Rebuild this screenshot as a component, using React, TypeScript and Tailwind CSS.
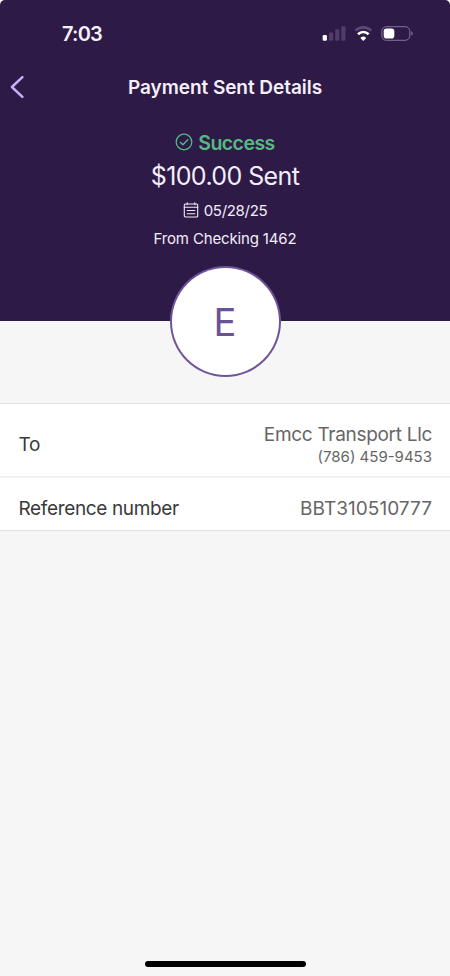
import type { ReactNode } from "react";

function StatusBar() {
  return (
    <div className="flex h-[60px] items-start justify-between pl-[62px] pr-[37px] pt-[22px]">
      <span className="text-[20px] font-semibold leading-6 tracking-[-0.8px] text-[#f6f1fa]">7:03</span>
      <svg width="92" height="20" viewBox="0 0 92 20" fill="none" className="mt-0.5">
        <rect x="1.7" y="11" width="4.2" height="5.8" rx="1.2" fill="#fff" />
        <rect x="8" y="8.6" width="4.2" height="8.2" rx="1.2" fill="#503d68" />
        <rect x="14.2" y="5.2" width="4.2" height="11.6" rx="1.2" fill="#503d68" />
        <rect x="20.3" y="2.2" width="4.2" height="14.6" rx="1.2" fill="#503d68" />
        <path d="M34.3 6.6a11.5 11.5 0 0 1 16 0" stroke="#5a4772" strokeWidth="2.6" />
        <path d="M37 10.2a7.6 7.6 0 0 1 10.6 0" stroke="#fff" strokeWidth="2.6" />
        <path d="M42.3 16.9l-2.9-3a4.2 4.2 0 0 1 5.8 0z" fill="#fff" />
        <rect x="60.8" y="2.7" width="28" height="13.6" rx="4.5" stroke="#84759a" />
        <rect x="62.7" y="4.4" width="10.6" height="10.2" rx="2.8" fill="#fff" />
        <path d="M90.3 7.3c1.8.6 1.8 3.8 0 4.4z" fill="#84759a" />
      </svg>
    </div>
  );
}

function NavBar() {
  return (
    <div className="grid h-[54px] grid-cols-[40px_1fr_40px] items-center">
      <button aria-label="Back" className="pl-2.5">
        <svg width="16" height="24" viewBox="0 0 16 24" fill="none" stroke="#c3b3f5" strokeWidth="2.5" strokeLinecap="round" strokeLinejoin="round">
          <path d="M12.4 2.2 1.9 12l10.5 9.8" />
        </svg>
      </button>
      <h1 className="pt-0.5 text-center text-[19px] font-semibold tracking-[-0.05px] text-[#f4effa]">Payment Sent Details</h1>
    </div>
  );
}

function Row({ label, className, children }: { label: string; className: string; children: ReactNode }) {
  return (
    <div className={`flex items-center justify-between pl-[18.5px] pr-[18px] ${className}`}>
      <span className="text-[19px] tracking-[-0.35px] text-[#3a3a3a]">{label}</span>
      <div className="text-right text-[#666]">{children}</div>
    </div>
  );
}

export default function App() {
  return (
    <div className="bg-white">
      <div className="flex h-[976px] w-[450px] flex-col overflow-hidden rounded-t-[5px] bg-[#f6f6f6] font-['Inter',sans-serif]">
        <header className="h-[321px] shrink-0 bg-[#2e1a47]">
          <StatusBar />
          <NavBar />
          <div className="flex flex-col items-center pt-4 text-[#f3edf8]">
            <div className="flex h-6 items-center gap-[5px] text-[#58b881]">
              <svg width="18" height="18" viewBox="0 0 18 18" fill="none" stroke="currentColor" strokeWidth="1.3" strokeLinecap="round" strokeLinejoin="round">
                <circle cx="9" cy="9" r="7.8" />
                <path d="m5.3 9.3 2.6 2.5 4.9-5.1" />
              </svg>
              <span className="pt-0.5 text-[19.5px] font-semibold leading-6 tracking-[-0.55px]">Success</span>
            </div>
            <p className="mt-1.5 h-8 text-[25px] leading-8 tracking-[-0.6px]">$100.00 Sent</p>
            <div className="mt-2 flex h-[22px] items-center gap-[5px]">
              <svg width="16" height="16" viewBox="0 0 16 16" fill="none" stroke="currentColor" strokeWidth="1.1" strokeLinecap="round" className="mb-[3px]">
                <rect x="1.3" y="2" width="13.4" height="13" rx="1" />
                <path d="M1.3 5.3h13.4M4.2.8v2M11.8.8v2M4.2 8.5h7.6M4.2 11.7h7.6" />
              </svg>
              <span className="text-[15px] tracking-[-0.3px]">05/28/25</span>
            </div>
            <p className="mt-1.5 text-[15px] leading-[22px] tracking-[-0.15px]">From Checking 1462</p>
          </div>
        </header>

        <div className="z-10 -mt-[55px] flex size-[111px] shrink-0 self-center rounded-full bg-[#6f5499] p-0.5">
          <div className="flex flex-1 items-center justify-center rounded-full bg-white">
            <span className="pt-px text-[38px] text-[#6b5295]">E</span>
          </div>
        </div>

        <section className="mt-[26px] border-y border-[#e0e0e0] bg-white">
          <Row label="To" className="h-[72px] pt-2.5">
            <p className="text-[19px] leading-6 tracking-[-0.3px]">Emcc Transport Llc</p>
            <p className="text-[15px] leading-5">(786) 459-9453</p>
          </Row>
          <Row label="Reference number" className="h-[54px] border-t-2 border-[#f1f1f1] pt-2.5">
            <p className="text-[19px] tracking-[0.05px]">BBT310510777</p>
          </Row>
        </section>

        <div className="mb-[9px] ml-[145px] mt-auto h-1.5 w-[161px] rounded-full bg-black" />
      </div>
    </div>
  );
}
